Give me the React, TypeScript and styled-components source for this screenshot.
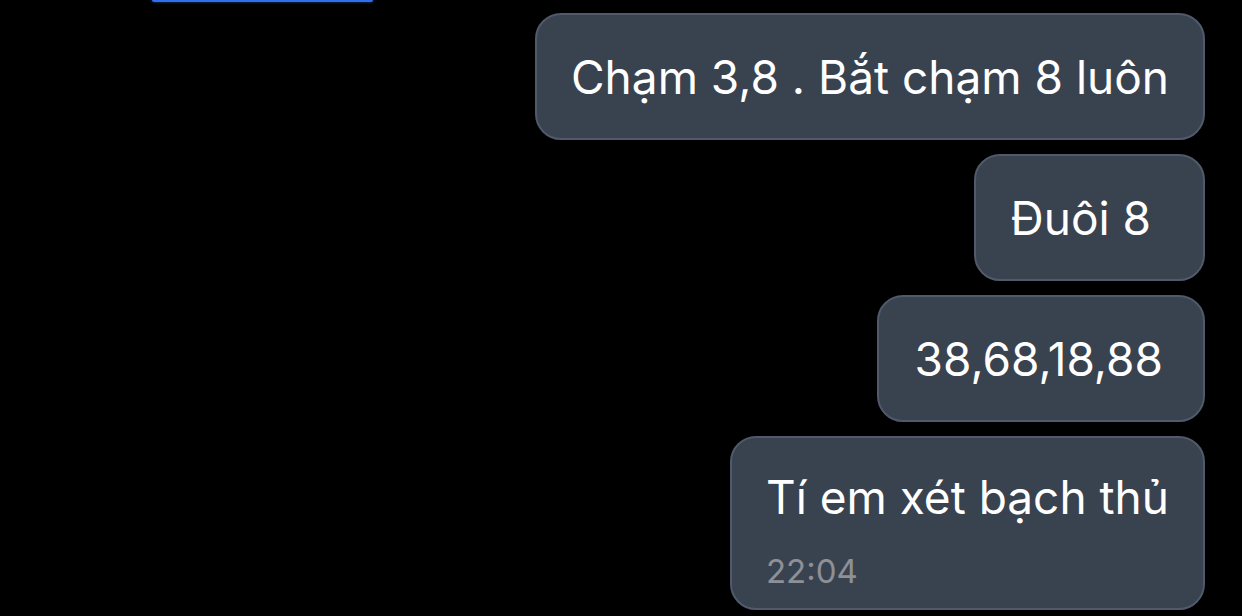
import styled, { createGlobalStyle } from "styled-components";

const GlobalStyle = createGlobalStyle`
  html, body {
    margin: 0;
    padding: 0;
    background: #000;
  }
  body {
    font-family: Inter, "Noto Sans", sans-serif;
    -webkit-font-smoothing: antialiased;
  }
`;

const Screen = styled.div`
  width: 1242px;
  height: 616px;
  background: #000;
  overflow: hidden;
  display: flex;
  flex-direction: column;
`;

const TopBar = styled.div`
  width: 221px;
  height: 2px;
  margin-left: 152px;
  background: #2f6fec;
  border-radius: 0 0 2px 2px;
  box-shadow: 0 0 3px rgba(47, 111, 236, 0.7);
`;

const Thread = styled.div`
  display: flex;
  flex-direction: column;
  align-items: flex-end;
  gap: 14px;
  padding: 11px 37px 0 0;
`;

const Bubble = styled.div<{ $withTime?: boolean; $padLeft?: number; $padRight?: number }>`
  box-sizing: border-box;
  min-height: 127px;
  padding: ${(p) => (p.$withTime ? "31px 34px 17px" : "0 34px")};
  padding-left: ${(p) => p.$padLeft ?? 34}px;
  padding-right: ${(p) => p.$padRight ?? 34}px;
  display: flex;
  flex-direction: column;
  justify-content: ${(p) => (p.$withTime ? "flex-start" : "center")};
  background: #39424f;
  border: 2px solid #505a6a;
  border-radius: 26px;
  color: #fff;
`;

const Text = styled.div`
  font-size: 46px;
  line-height: 56px;
  white-space: nowrap;
`;

const Time = styled.div`
  margin-top: 26px;
  font-size: 33px;
  line-height: 40px;
  color: #8d9096;
`;

const messages = [
  { text: "Chạm 3,8 . Bắt chạm 8 luôn", left: 34, right: 34 },
  { text: "Đuôi 8", left: 34, right: 52 },
  { text: "38,68,18,88", left: 36, right: 40 },
];

export default function App() {
  return (
    <>
      <GlobalStyle />
      <Screen>
        <TopBar />
        <Thread>
          {messages.map((m) => (
            <Bubble key={m.text} $padLeft={m.left} $padRight={m.right}>
              <Text>{m.text}</Text>
            </Bubble>
          ))}
          <Bubble $withTime>
            <Text>Tí em xét bạch thủ</Text>
            <Time>22:04</Time>
          </Bubble>
        </Thread>
      </Screen>
    </>
  );
}
